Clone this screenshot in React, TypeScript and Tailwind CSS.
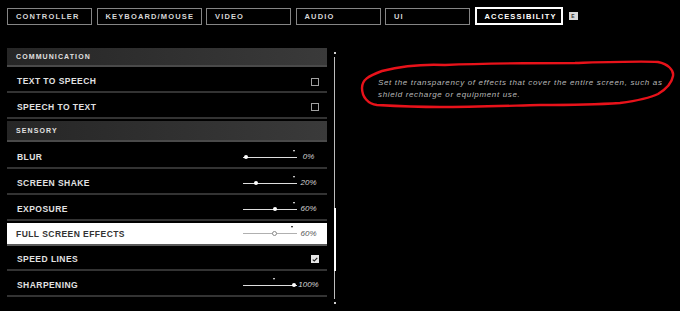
import React from "react";

const tabs = [
  { label: "CONTROLLER", w: "w-[85px]" },
  { label: "KEYBOARD/MOUSE", w: "w-[105px]" },
  { label: "VIDEO", w: "w-[85px]" },
  { label: "AUDIO", w: "w-[85px]" },
  { label: "UI", w: "w-[85px]" },
];

const font = { fontFamily: '"Liberation Sans", Arial, sans-serif' };

function Slider({
  value,
  marker,
  active = false,
}: {
  value: number;
  marker: number;
  active?: boolean;
}) {
  const knob = 3 + value * 48;
  const mk = 3 + marker * 48;
  return (
    <div className="flex items-center">
      <div className={`relative h-[1px] w-[54px] ${active ? "bg-[#b0b0b0]" : "bg-[#dedede]"}`}>
        {active ? (
          <div
            className="absolute top-[-2px] h-[5px] w-[5px] rounded-full border border-[#8a8a8a] bg-white"
            style={{ left: knob - 2.5 }}
          />
        ) : (
          <div
            className="absolute top-[-1.5px] h-[4px] w-[4px] rounded-full bg-white"
            style={{ left: knob - 2 }}
          />
        )}
        <div
          className={`absolute top-[-7px] h-0 w-0 border-x-[1.5px] border-t-[2px] border-x-transparent ${
            active ? "border-t-black" : "border-t-white"
          }`}
          style={{ left: mk - 1.5 }}
        />
      </div>
      <div
        className={`w-[23px] text-center text-[8px] italic leading-[8px] ${
          active ? "text-[#555]" : "text-[#d4d4d4]"
        }`}
      >
        {Math.round(value * 100)}%
      </div>
    </div>
  );
}

function Checkbox({ checked = false }: { checked?: boolean }) {
  if (checked) {
    return (
      <div className="mr-[1px] flex h-[8px] w-[8px] items-center justify-center bg-[#e6e6e6]">
        <svg width="6" height="5" viewBox="0 0 6 5">
          <path d="M0.7 2.6 L2.3 4 L5.3 0.8" fill="none" stroke="#222" strokeWidth="1.1" />
        </svg>
      </div>
    );
  }
  return <div className="mr-[1px] h-[8px] w-[8px] border border-[#a0a0a0]" />;
}

function Row({
  label,
  h,
  children,
}: {
  label: string;
  h: string;
  children?: React.ReactNode;
}) {
  return (
    <div className={`flex ${h} items-end border-b-2 border-[#333333] pb-[6px] pl-[10px] pr-[7px]`}>
      <span className="flex-1 text-[8.5px] font-bold leading-[8px] tracking-[0.45px] text-[#e2e2e2]">
        {label}
      </span>
      {children}
    </div>
  );
}

function Header({ label, className = "" }: { label: string; className?: string }) {
  return (
    <div
      className={`flex items-center border-b-2 border-[#4a4a4a] bg-gradient-to-r from-[#262626] to-[#3a3a3a] pl-[9px] ${className}`}
    >
      <span className="text-[7px] font-bold leading-[7px] tracking-[1.1px] text-[#e0e0e0]">
        {label}
      </span>
    </div>
  );
}

export default function App() {
  return (
    <div className="relative h-[311px] w-[680px] overflow-hidden bg-black" style={font}>
      {/* Tabs */}
      <div className="flex items-center gap-[4.5px] pl-[7px] pt-[7px]">
        {tabs.map((t) => (
          <div
            key={t.label}
            className={`flex h-[17px] ${t.w} items-center border-[1.5px] border-[#858585] pl-[8px]`}
          >
            <span className="text-[7.5px] font-bold leading-[7px] tracking-[1.15px] text-[#d6d6d6]">
              {t.label}
            </span>
          </div>
        ))}
        <div className="flex h-[18px] w-[88px] items-center border-2 border-white pl-[8px]">
          <span className="text-[7.5px] font-bold leading-[7px] tracking-[1.15px] text-white">
            ACCESSIBILITY
          </span>
        </div>
        <div className="ml-[1.5px] flex h-[8px] w-[9px] items-center justify-center bg-[#d9d9d9]">
          <span className="text-[5px] font-bold leading-[5px] text-[#333]">E</span>
        </div>
      </div>

      {/* Main */}
      <div className="mt-[23px] flex pl-[7px]">
        <div className="flex w-[320px] flex-col">
          <Header label="COMMUNICATION" className="h-[19px]" />
          <Row label="TEXT TO SPEECH" h="h-[26px]">
            <div className="mb-[-0.5px]">
              <Checkbox />
            </div>
          </Row>
          <Row label="SPEECH TO TEXT" h="h-[26px]">
            <Checkbox />
          </Row>
          <Header label="SENSORY" className="mt-[2px] h-[21px]" />
          <Row label="BLUR" h="h-[27px]">
            <Slider value={0} marker={1} />
          </Row>
          <Row label="SCREEN SHAKE" h="h-[26px]">
            <Slider value={0.2} marker={1} />
          </Row>
          <Row label="EXPOSURE" h="h-[26px]">
            <Slider value={0.6} marker={1} />
          </Row>
          <div className="mt-[2px] flex h-[23px] items-center border-b-2 border-[#5a5a5a] bg-white pl-[9px] pr-[7px]">
            <span className="flex-1 text-[8.5px] font-bold leading-[8px] tracking-[0.45px] text-[#333]">
              FULL SCREEN EFFECTS
            </span>
            <Slider value={0.6} marker={0.96} active />
          </div>
          <Row label="SPEED LINES" h="h-[25px]">
            <Checkbox checked />
          </Row>
          <Row label="SHARPENING" h="h-[26px]">
            <Slider value={1} marker={0.6} />
          </Row>
        </div>

        {/* Scrollbar */}
        <div className="ml-[6px] flex w-[3px] flex-col items-center">
          <div className="mt-[4px] h-[2px] w-[2px] bg-[#cfcfcf]" />
          <div className="mt-[3px] h-[151px] w-[1px] bg-[#bdbdbd]" />
          <div className="h-[63px] w-[2px] bg-white" />
          <div className="h-[28px] w-[1px] bg-[#bdbdbd]" />
          <div className="mt-[3px] h-[2px] w-[2px] bg-[#cfcfcf]" />
        </div>

        {/* Description */}
        <div className="ml-[42px] mt-[29px] w-[300px] text-[8px] italic leading-[12px] tracking-[0.65px] text-[#b8b8b8]">
          Set the transparency of effects that cover the entire screen, such as
          <br />
          shield recharge or equipment use.
        </div>
      </div>

      {/* Red hand-drawn annotation */}
      <svg
        className="pointer-events-none absolute left-0 top-0"
        width="680"
        height="311"
        viewBox="0 0 680 311"
      >
        <path
          d="M382 71 C402 66 425 64 445 65 C490 63 540 63 575 63 C610 62 640 61 658 62 C668 64 674 70 673 76 C672 82 668 88 658 94 C648 99 635 101 620 103 C590 105 565 105 540 105 C500 106 470 107 440 107 C420 107 395 106 377 105 C368 104 362 97 362 88 C362 80 368 76 382 71 Z"
          fill="none"
          stroke="#e8121a"
          strokeWidth="2.4"
          strokeLinejoin="round"
          strokeLinecap="round"
        />
      </svg>
    </div>
  );
}
